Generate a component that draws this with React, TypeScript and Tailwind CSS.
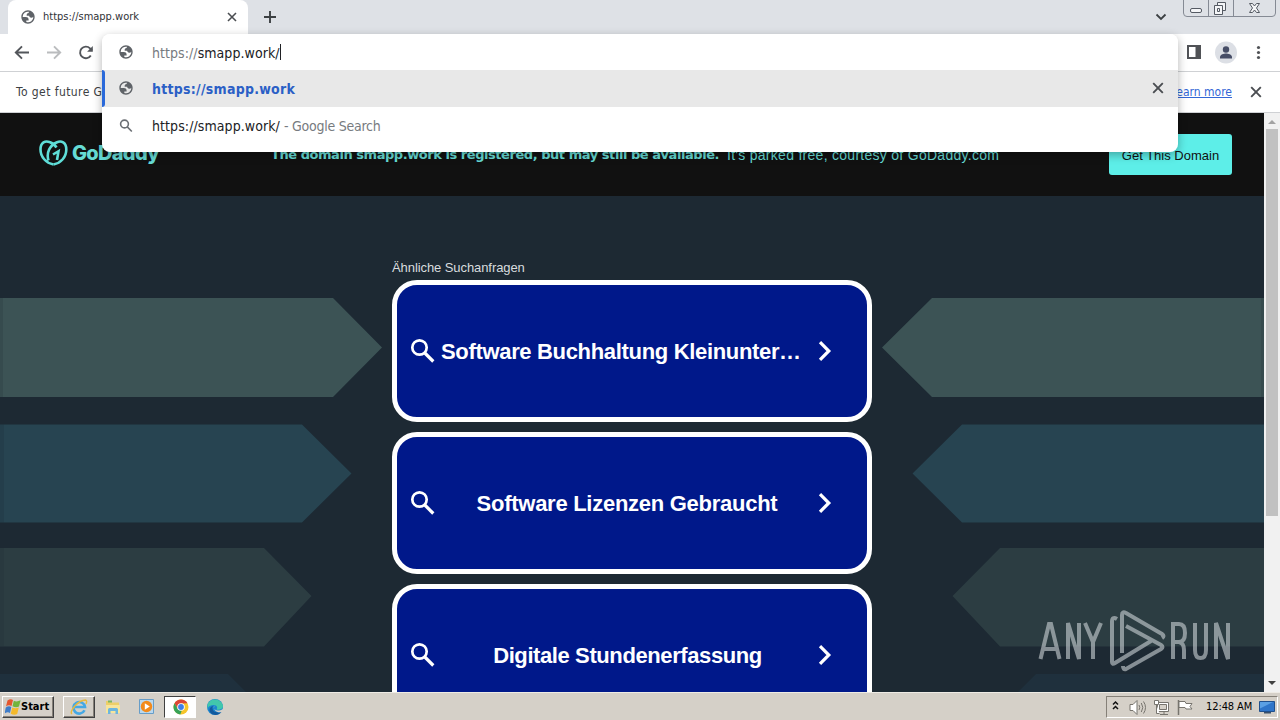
import React from "react";

const TAHOMA = "font-['DejaVu_Sans_Condensed','DejaVu_Sans',sans-serif] [font-stretch:condensed]";
const ARIAL = "font-['Liberation_Sans',Arial,sans-serif]";

function Globe({ className = "" }: { className?: string }) {
  return (
    <svg viewBox="0 0 24 24" className={className} fill="#5f6368">
      <path
        d="M12 2C6.480 2 2 6.480 2 12s4.480 10 10 10 10-4.480 10-10S17.520 2 12 2zM4 12h4.400c3.407.022 4.922 1.730 4.543 5.127H9.488v2.470a8.004 8.004 0 0 0 10.498-8.083C19.327 12.504 18.332 13 17 13c-2.137 0-3.206-.916-3.206-2.750h-3.748c-.274-2.728.683-4.092 2.870-4.092 0-.975.327-1.597.811-1.970A8.004 8.004 0 0 0 4 12z"
        fillRule="evenodd"
      />
    </svg>
  );
}

function Cross({ className = "", width = 2 }: { className?: string; width?: number }) {
  return (
    <svg viewBox="0 0 12 12" className={className} fill="none" stroke="#4a4d51" strokeWidth={width}>
      <path d="M1.200 1.200l9.600 9.600M10.800 1.200l-9.600 9.600" />
    </svg>
  );
}

function TabStrip() {
  return (
    <div className="relative flex h-[34px] shrink-0 bg-[#dee1e6]">
      <div className="ml-2 flex h-full w-[240px] items-center rounded-t-lg bg-white pl-3 pr-[11px]">
        <Globe className="h-4 w-4 shrink-0" />
        <span className={`${TAHOMA} ml-[7px] flex-1 whitespace-nowrap text-[11px] text-[#303236]`}>https://smapp.work</span>
        <Cross className="h-[10px] w-[10px]" width={1.9} />
      </div>
      <svg viewBox="0 0 12 12" className="ml-4 mt-[11px] h-3 w-3" stroke="#3c4043" strokeWidth="1.900">
        <path d="M6 0v12M0 6h12" />
      </svg>
      <div className="flex-1" />
      <svg viewBox="0 0 12 8" className="mr-[16px] mt-[13px] h-2 w-3" fill="none" stroke="#3c4043" strokeWidth="1.800">
        <path d="M1.500 1.500L6 6l4.500-4.500" />
      </svg>
      <svg viewBox="0 0 94 18" className="mr-[3px] h-[18px] w-[94px]" fill="none" stroke="#858a94">
        <path d="M.5 0v13q0 3.500 3.500 3.500h85q3.500 0 3.500-3.500V0M25.500 0v16.500M50.500 0v16.500" />
        <rect x="7.500" y="8.500" width="11" height="4" rx="1.500" fill="#f4f5f7" stroke="#555a63" />
        <path d="M34.500 2.500h8v8h-8z" fill="#f4f5f7" stroke="#555a63" />
        <path d="M31.500 5.500h8v9h-8zM34.500 8.500h2v3h-2z" fill="#f4f5f7" stroke="#555a63" />
        <path d="M66.500 3.500h3l2 2.500 2-2.500h3l-3 4.500 3 4.500h-3l-2-2.500-2 2.500h-3l3-4.500z" fill="#f4f5f7" stroke="#555a63" />
      </svg>
    </div>
  );
}

function Toolbar() {
  return (
    <div className="flex h-[38px] shrink-0 items-center border-b border-[#cfd1d4] bg-white">
      <svg viewBox="0 0 100 36" className="h-9 w-[100px]" fill="none" stroke="#53565b" strokeWidth="1.900">
        <path d="M29 17.500H16.500M22 11.300L15.800 17.500l6.200 6.200" />
        <path d="M47 17.500h12.500M54 11.300l6.200 6.200-6.200 6.200" stroke="#babcbe" />
        <path d="M90.800 20.500A5.800 5.800 0 1 1 90 13.300l2 2.200" />
        <path d="M92.800 11v5.700h-5.700z" fill="#53565b" stroke="none" />
      </svg>
      <div className="flex-1" />
      <svg viewBox="0 0 100 36" className="h-9 w-[100px]">
        <path d="M7 10h14v14H7zM9 12v10h6.500V12z" fill="#505256" fillRule="evenodd" />
        <circle cx="46" cy="17.500" r="11" fill="#dcdfe5" />
        <circle cx="46" cy="14.500" r="3.200" fill="#464d66" />
        <path d="M40 23.500v-1.500c0-2.500 4-3.500 6-3.500s6 1 6 3.500v1.500z" fill="#464d66" />
        <g fill="#505256">
          <circle cx="78.500" cy="12.500" r="1.600" />
          <circle cx="78.500" cy="17.500" r="1.600" />
          <circle cx="78.500" cy="22.500" r="1.600" />
        </g>
      </svg>
    </div>
  );
}

function InfoBar() {
  return (
    <div className={`${TAHOMA} flex h-[41px] shrink-0 items-center border-b border-[#cfd1d4] bg-white pl-4 pr-[18px] text-[12px] text-[#3c4043]`}>
      <span className="whitespace-nowrap tracking-[0.42px]">To get future G</span>
      <span className="flex-1" />
      <span className="mr-[18px] whitespace-nowrap text-[#3367d6] underline">Learn more</span>
      <Cross className="h-3 w-3" width={1.9} />
    </div>
  );
}

function Omnibox() {
  return (
    <div className={`${TAHOMA} absolute left-[102px] top-[34px] flex h-[118px] w-[1076px] flex-col overflow-hidden rounded-lg bg-white text-[14px]`}>
      <div className="flex h-9 items-center pl-4">
        <Globe className="h-4 w-4" />
        <span className="ml-[18px] whitespace-nowrap pt-0.5 tracking-[0.06px] text-[#202124]"><span className="text-[#777b80]">https://</span>smapp.work/</span>
        <span className="h-4 w-px bg-[#202124]" />
      </div>
      <div className="flex h-[37px] items-center bg-[#e8e8e8]">
        <span className="h-full w-[3px] rounded-r bg-[#2a69da]" />
        <Globe className="mb-px ml-[13px] h-4 w-4" />
        <span className="ml-[18px] flex-1 whitespace-nowrap pt-px font-bold tracking-[0.25px] text-[#2b5fc6]">https://smapp.work</span>
        <Cross className="mb-px mr-[14px] h-[12px] w-[12px]" width={1.9} />
      </div>
      <div className="flex h-[38px] items-center pl-4">
        <svg viewBox="0 0 16 16" className="h-4 w-4" fill="none" stroke="#6b6f74" strokeWidth="1.600">
          <circle cx="6.500" cy="6" r="3.900" />
          <path d="M9.300 8.900L13.800 13.500" />
        </svg>
        <span className="ml-[18px] whitespace-nowrap tracking-[0.08px] text-[#202124]">https://smapp.work/</span>
        <span className="ml-1 whitespace-nowrap tracking-[-0.24px] text-[#777b80]">- Google Search</span>
      </div>
    </div>
  );
}

function Header() {
  return (
    <div className="flex h-[83px] shrink-0 items-center bg-[#111] text-[#66dbd5]">
      <div className="mb-[3px] ml-[39px] flex h-7 w-[120px] items-center">
        <svg viewBox="0 0 29 26" className="h-[26px] w-[29px] shrink-0" fill="none" stroke="#5fded8" strokeWidth="2.600">
          <path d="M14.500 24.500C7 23 1.500 17 1.500 9.500 1.500 2 6.500.5 10.500 2c3 1 5.500 3 7 5.500" />
          <path d="M14.500 24.500C22 23 27.300 17 27.300 9.500 27.300 2 22 .5 18 2.200 11 5 7 12.500 9.500 20.500" />
          <path d="M14 14.500l5.500-3.300L18 20" />
        </svg>
        <span className="ml-[4px] whitespace-nowrap font-['Inter',sans-serif] text-[20px] font-extrabold leading-none tracking-[-0.7px]">GoDaddy</span>
      </div>
      <div className="ml-[112px] flex w-[838px] items-center whitespace-nowrap pt-px">
        <span className="font-['DejaVu_Sans',sans-serif] text-[13px] font-bold tracking-[-0.45px]">The domain smapp.work is registered, but may still be available.</span>
        <span className={`${ARIAL} ml-2 text-[14px] tracking-[0.28px]`}>It's parked free, courtesy of GoDaddy.com</span>
      </div>
      <div className={`${ARIAL} flex h-[41px] w-[123px] items-center justify-center rounded-[3px] bg-[#5deee8] pt-[2px] text-[13px] text-[#111]`}>
        <span className="whitespace-nowrap">Get This Domain</span>
      </div>
    </div>
  );
}

function Arrows() {
  return (
    <svg viewBox="0 0 1264 496" className="absolute inset-0 h-[496px] w-[1264px]">
      <g fill="#3c5355">
        <path d="M0 102h333l49 49.500-49 49.500H0zM1264 102H932l-50 49.500 50 49.500h332z" />
      </g>
      <g fill="#274451">
        <path d="M0 228.500h302l49.500 49-49.500 49H0zM1264 228.500H962l-49.500 49 49.500 49h302z" />
      </g>
      <g fill="#2c3d42">
        <path d="M0 352h264l47.500 48-47.500 50.500H0zM1264 352h-264l-47.500 48 47.500 50.500h264z" />
      </g>
      <g fill="#1f303d">
        <path d="M0 478h228l18 18H0zM1264 478h-228l-18 18h246z" />
      </g>
      <path d="M0 102h3v99H0zM0 228.500h4v98H0zM0 352h4v98H0zM1261 102h3v99h-3z" fill="#1d2933" opacity=".18" />
    </svg>
  );
}

function SearchCard({ label, labelClass }: { label: string; labelClass: string }) {
  return (
    <div className="flex h-[142px] w-[480px] shrink-0 items-center rounded-[25px] border-[5px] border-white bg-[#00188a] pl-[13px] pr-[34px]">
      <svg viewBox="0 0 26 26" className="h-[26px] w-[26px] shrink-0" fill="none" stroke="#fff" strokeWidth="2.700">
        <circle cx="9.500" cy="9.500" r="7.200" />
        <path d="M14.800 15l8.500 8.500" strokeWidth="3.200" />
      </svg>
      <span className={`${ARIAL} flex-1 whitespace-nowrap text-[22px] font-bold text-white ${labelClass}`}>{label}</span>
      <svg viewBox="0 0 16 22" className="h-[22px] w-4 shrink-0" fill="none" stroke="#fff" strokeWidth="3.200">
        <path d="M3 2.200l8.800 8.800L3 19.800" />
      </svg>
    </div>
  );
}

function Watermark() {
  return (
    <div className="absolute left-[1038px] top-[413px] flex h-[64px] w-[194px] items-center opacity-60">
      <svg viewBox="0 0 194 64" className="h-16 w-[194px]" fill="none" stroke="#cdd3d7" strokeWidth="4">
        <path d="M2.500 50L11 15h2l8.500 35M5 40h14M30 50V14l11 36V14M47 14l8 19 8-19M55 32v18" />
        <path d="M135 50V15h6q6 0 6 9t-6 9h-6M141 33q5 1 5 8v9M157 14v27q0 8 5.500 8t5.500-8V14M178 50V14l12 36V14" />
        <path d="M79 10q-5-3-5 3v40q0 3 3 1l36-22M84 44V6q0-4 4-2l36 21q3 2 0 4M88 17l35 19q3 2 0 4L88 60q-3 1-3-3" strokeWidth="4" />
      </svg>
    </div>
  );
}

function Page() {
  return (
    <div className="flex min-h-0 flex-1">
      <div className="flex w-[1264px] flex-col">
        <Header />
        <div className="relative flex min-h-0 flex-1 flex-col items-center overflow-hidden bg-[#1d2933]">
          <Arrows />
          <div className="relative flex w-[480px] flex-col gap-[10px] pt-[62px]">
            <span className={`${ARIAL} -mb-[10px] h-[22px] text-[13px] leading-[19px] tracking-[-0.08px] text-[#d8dcdf]`}>Ähnliche Suchanfragen</span>
            <SearchCard label="Software Buchhaltung Kleinunter…" labelClass="pl-[5px] text-left tracking-[-0.33px]" />
            <SearchCard label="Software Lizenzen Gebraucht" labelClass="pl-px text-center tracking-[-0.27px]" />
            <SearchCard label="Digitale Stundenerfassung" labelClass="pl-0.5 text-center tracking-[-0.4px]" />
          </div>
          <Watermark />
        </div>
      </div>
      <div className="flex w-4 flex-col items-center bg-[#f1f1f1]">
        <svg viewBox="0 0 16 16" className="h-4 w-4 shrink-0" fill="#a3a3a3"><path d="M4 11l4-4 4 4z" /></svg>
        <div className="h-[387px] w-3 bg-[#c1c1c1]" />
        <div className="flex-1" />
        <svg viewBox="0 0 16 16" className="h-4 w-4 shrink-0" fill="#404040"><path d="M4 5l4 4 4-4z" /></svg>
      </div>
    </div>
  );
}

function Taskbar() {
  return (
    <div className="flex h-7 shrink-0 items-center border-t border-[#eeebe5] bg-[#d5d0c8] pt-px">
      <div className={`${TAHOMA} ml-[2px] flex h-[22px] w-[52px] items-center border border-b-[#404040] border-l-white border-r-[#404040] border-t-white pl-[2px] text-[11px] font-bold text-black shadow-[inset_-1px_-1px_#858078]`}>
        <svg viewBox="0 0 16 16" className="h-4 w-4 shrink-0">
          <path d="M2.500 1.500q3-2 5.500-.5L6.500 7q-3-1.500-5.500.5z" fill="#e5562d" />
          <path d="M8.800 1.800q3 1.500 6.800-.5L14 7.500q-3 1.500-6.500-.2z" fill="#72b43c" />
          <path d="M.8 8.500q3-2 5.500-.5L5 14Q2.500 12.500-.5 14.500z" fill="#3e7cc8" />
          <path d="M7.300 8.500q3 1.500 6.500 0L12.200 15q-3 1.500-6.500-.3z" fill="#f4ba2c" />
        </svg>
        <span>Start</span>
      </div>
      <div className="ml-[9px] flex h-[22px] w-8 items-center justify-center border border-b-[#404040] border-l-white border-r-[#404040] border-t-white shadow-[inset_-1px_-1px_#858078]">
        <svg viewBox="0 0 18 18" className="h-[18px] w-[18px]" fill="none">
          <path d="M14.500 12.300A5.800 5.800 0 1 1 15 9H5" stroke="#45a8e4" strokeWidth="2.600" />
          <path d="M2 16C-1.500 14 8 2 15.500 2q2 .5.500 4" stroke="#e9b93c" strokeWidth="1.400" />
        </svg>
      </div>
      <svg viewBox="0 0 18 18" className="ml-[9px] h-[18px] w-[18px]">
        <path d="M2 3h5l1 1.500h7V14H2z" fill="#edcf68" />
        <path d="M4 2.500h4v2H4z" fill="#7bb661" />
        <path d="M2 7h14v8H2z" fill="#f7e59b" />
        <path d="M4 16v-4.500q0-1.500 1.500-1.500h7q1.500 0 1.500 1.500V16h-2.500v-3h-5v3z" fill="#6db6de" />
      </svg>
      <svg viewBox="0 0 18 18" className="ml-4 h-[18px] w-[18px]">
        <path d="M1.500 1.500h14v14h-14z" fill="#bad8ee" stroke="#679dc8" />
        <circle cx="8.500" cy="8.500" r="5.700" fill="#f28a1b" />
        <path d="M6.800 5.200l5 3.300-5 3.300z" fill="#fff" />
      </svg>
      <div className="ml-[8px] flex h-[22px] w-8 items-center justify-center border border-b-white border-l-[#404040] border-r-white border-t-[#404040] bg-white">
        <svg viewBox="0 0 16 16" className="ml-px h-4 w-4">
          <circle cx="8" cy="8" r="7.500" fill="#f6c52b" />
          <path d="M1.500 4.200A7.500 7.500 0 0 1 14.500 4.200L8 4.500 4.800 10z" fill="#dc4637" />
          <path d="M1.500 4.200L4.800 10l4 1.500L7.300 15.500A7.500 7.500 0 0 1 1.500 4.200z" fill="#37a257" />
          <circle cx="8" cy="8" r="3.800" fill="#fff" />
          <circle cx="8" cy="8" r="2.900" fill="#3f7fe8" />
        </svg>
      </div>
      <svg viewBox="0 0 18 18" className="ml-[10px] h-[18px] w-[18px]">
        <circle cx="9" cy="9" r="8" fill="#1c86cf" />
        <path d="M1.500 7C3 .5 14 -1 17 7.500c.5 4-4 5-6.500 4 2-3-1-5-3.500-4.500-3 .3-5 2-5.500 4z" fill="#42c7ac" />
        <path d="M7 8c-2 4 2 8 8.500 6-4 5-12 3-12-2C3.500 10 5 8.500 7 8z" fill="#135a9e" />
        <path d="M8.500 7.500c-1.500 2-.5 4.500 3 5 2 0 4-.5 5-1.500l1.500 2.500-2.500.5c-4 1.500-9-2-7-6.500z" fill="#d5d0c8" />
      </svg>
      <div className="flex-1" />
      <div className="mr-[2px] flex h-[22px] w-[172px] items-center border border-b-white border-l-[#858078] border-r-white border-t-[#858078]">
        <svg viewBox="0 0 98 20" className="h-5 w-[98px] shrink-0" fill="none" stroke="#77746e">
          <path d="M6 7.500l2.500-2.500L11 7.500M6 12l2.500-2.500L11 12" stroke="#111" strokeWidth="1.500" />
          <path d="M23 7.500h3l4-4v14l-4-4h-3z" fill="#fff" />
          <path d="M32 8q1.500 2.500 0 5M34.300 6q3 4.500 0 9M36.500 4.500q4 6 0 12" />
          <path d="M50.500 5.500h11v9h-11z" fill="#fff" />
          <path d="M52.500 7.500h7v5h-7z" fill="#d5d0c8" />
          <path d="M47.500 3.500h4v4h-4zM49.500 7.500v9h3M53 17.500h8M57 14.500v3" fill="#fff" />
          <path d="M71.500 3v15" strokeWidth="1.500" />
          <path d="M72 4.500h6l1 2h6l-2 3 2 2.500h-6l-1-1.500h-6z" fill="#fff" />
        </svg>
        <span className={`${TAHOMA} ml-px w-[48px] whitespace-nowrap pt-px text-[11px] tracking-[-0.1px] text-black`}>12:48 AM</span>
        <svg viewBox="0 0 16 16" className="ml-[5px] h-4 w-4">
          <path d="M.5 2.500h15v10H.5z" fill="#2f75c9" stroke="#20508d" />
          <path d="M1 3h13L1 9.500z" fill="#5ba0e4" />
          <path d="M5 13h7v1.500H5z" fill="#39506b" />
        </svg>
      </div>
    </div>
  );
}

export default function App() {
  return (
    <div className="relative flex h-[720px] w-[1280px] flex-col overflow-hidden bg-white">
      <TabStrip />
      <Toolbar />
      <InfoBar />
      <Page />
      <Taskbar />
      <div className="absolute left-[102px] top-[34px] h-[118px] w-[1076px] rounded-lg shadow-[0_3px_10px_rgba(0,0,0,0.3)]" />
      <Omnibox />
    </div>
  );
}
